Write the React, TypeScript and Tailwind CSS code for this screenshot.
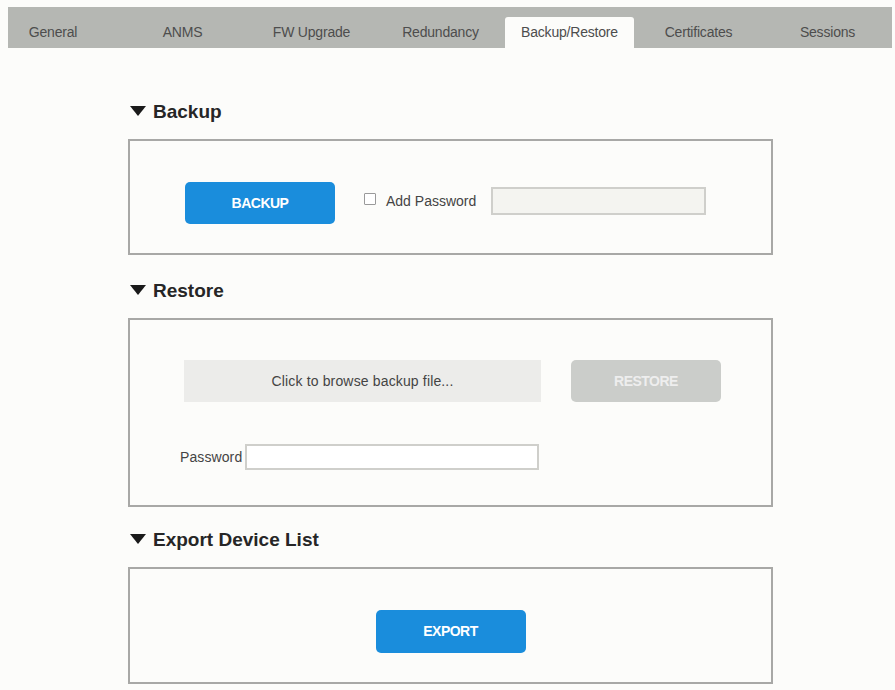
import React from "react";

const TABS = ["General", "ANMS", "FW Upgrade", "Redundancy", "Backup/Restore", "Certificates", "Sessions"];
const ACTIVE = "Backup/Restore";

function Caret() {
  return (
    <svg width="16" height="11" viewBox="0 0 16 11" className="mr-[7px] shrink-0">
      <path d="M0 0 H16 L8 10 Z" fill="#1a1a1a" />
    </svg>
  );
}

function SectionTitle({ children }: { children: React.ReactNode }) {
  return (
    <div className="flex items-center h-[22px] pl-[2px]">
      <Caret />
      <span className="text-[19px] font-bold text-[#262626] leading-none">{children}</span>
    </div>
  );
}

export default function App() {
  return (
    <div
      className="min-h-screen bg-[#fcfcfa] pt-[7px]"
      style={{ fontFamily: '"Liberation Sans", Arial, sans-serif' }}
    >
      {/* tab bar */}
      <div className="ml-[8px] w-[884px] h-[41px] bg-[#b5b7b3] flex items-end">
        {TABS.map((t, i) => (
          <div
            key={t}
            className={
              (i === 0 ? "w-[110px] pr-[20px] " : "w-[129px] ") +
              (t === ACTIVE
                ? "h-[31px] bg-[#fcfcfa] rounded-t-[3px] pb-[5px] "
                : "h-[41px] pb-[5px] ") +
              "flex items-end justify-center text-[14px] text-[#4d4d4d] tracking-[-0.2px]"
            }
          >
            {t}
          </div>
        ))}
      </div>

      <div className="ml-[128px] w-[645px]">
        {/* Backup */}
        <div className="mt-[52px]">
          <SectionTitle>Backup</SectionTitle>
        </div>
        <div className="mt-[17px] h-[116px] border-2 border-[#a8a8a6] flex items-center pl-[55px]">
          <button className="w-[150px] h-[42px] rounded-[5px] bg-[#1a8ddc] text-white text-[14px] font-bold tracking-[-0.5px] mt-[12px]">
            BACKUP
          </button>
          <div className="flex items-center ml-[29px] mt-[8px]">
            <span className="w-[12px] h-[12px] border border-[#9a9a9a] bg-white rounded-[1px] -mt-[4px]" />
            <span className="ml-[10px] text-[14px] text-[#444]">Add Password</span>
            <div className="ml-[15px] w-[215px] h-[28px] border-2 border-[#cfcfcb] bg-[#f4f4f0]" />
          </div>
        </div>

        {/* Restore */}
        <div className="mt-[24px]">
          <SectionTitle>Restore</SectionTitle>
        </div>
        <div className="mt-[17px] h-[189px] border-2 border-[#a8a8a6] pl-[54px] pt-[40px]">
          <div className="flex">
            <div className="w-[357px] h-[42px] bg-[#ececea] flex items-center justify-center text-[14px] text-[#444] tracking-[0.15px]">
              Click to browse backup file...
            </div>
            <button className="ml-[30px] w-[150px] h-[42px] rounded-[5px] bg-[#cbcdca] text-[#eeeeee] text-[14px] font-bold tracking-[-0.5px]">
              RESTORE
            </button>
          </div>
          <div className="flex items-center mt-[42px] -ml-[4px]">
            <span className="w-[65px] text-[14px] text-[#444] tracking-[0.1px] whitespace-nowrap">Password</span>
            <div className="w-[294px] h-[26px] border-2 border-[#cfcfcb] bg-white" />
          </div>
        </div>

        {/* Export */}
        <div className="mt-[21px]">
          <SectionTitle>Export Device List</SectionTitle>
        </div>
        <div className="mt-[17px] h-[117px] border-2 border-[#a8a8a6] flex items-center justify-center">
          <button className="w-[150px] h-[43px] rounded-[5px] bg-[#1a8ddc] text-white text-[14px] font-bold tracking-[-0.5px] mt-[12px]">
            EXPORT
          </button>
        </div>
      </div>
    </div>
  );
}
